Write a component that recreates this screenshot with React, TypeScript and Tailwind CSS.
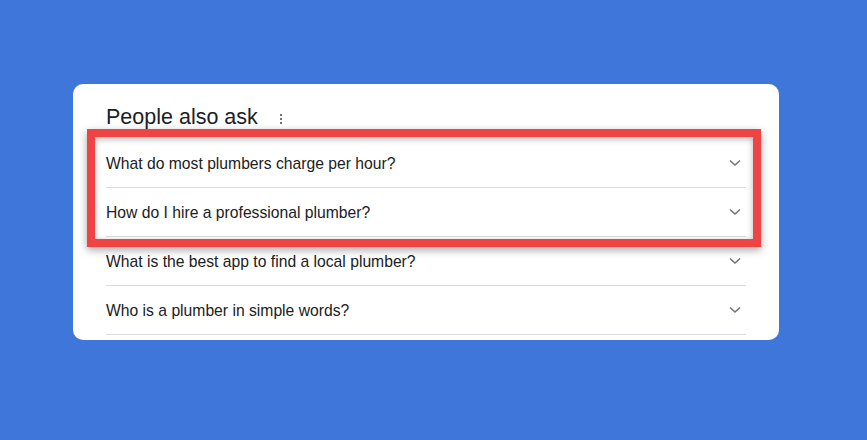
const questions = [
  "What do most plumbers charge per hour?",
  "How do I hire a professional plumber?",
  "What is the best app to find a local plumber?",
  "Who is a plumber in simple words?",
];

function Chevron() {
  return (
    <svg width="12" height="8" viewBox="0 0 12 8" className="shrink-0">
      <path d="M1 1.5 L6 6 L11 1.5" fill="none" stroke="#70757a" strokeWidth="1.6" />
    </svg>
  );
}

function Dots() {
  return (
    <svg width="4" height="12" viewBox="0 0 4 12" className="ml-[21px] mt-[8px]">
      <rect x="1" y="1" width="2" height="2" fill="#70757a" />
      <rect x="1" y="5" width="2" height="2" fill="#70757a" />
      <rect x="1" y="9" width="2" height="2" fill="#70757a" />
    </svg>
  );
}

export default function App() {
  return (
    <div
      className="h-[440px] w-[867px] overflow-hidden bg-[#3e76d9] pl-[73px] pt-[84px]"
      style={{ fontFamily: '"Liberation Sans", Arial, sans-serif' }}
    >
      <div className="relative h-[256px] w-[706px] rounded-[10px] bg-white px-[33px] pt-[21px]">
        <div className="flex items-start">
          <h2 className="text-[21.5px] leading-[24px] text-[#202124]">People also ask</h2>
          <Dots />
        </div>

        <div className="mt-[10px]">
          {questions.map((q) => (
            <div
              key={q}
              className="flex h-[49px] items-center justify-between border-b border-[#dadce0] pr-[5px]"
            >
              <span className="pt-[2px] text-[15.7px] text-[#202124]">{q}</span>
              <Chevron />
            </div>
          ))}
        </div>

        <div className="pointer-events-none absolute left-[14px] top-[45px] h-[118px] w-[674px] border-[8px] border-[#ef4444] shadow-[0_3px_8px_rgba(0,0,0,0.35),inset_0_2px_6px_rgba(0,0,0,0.3)]" />
      </div>
    </div>
  );
}
